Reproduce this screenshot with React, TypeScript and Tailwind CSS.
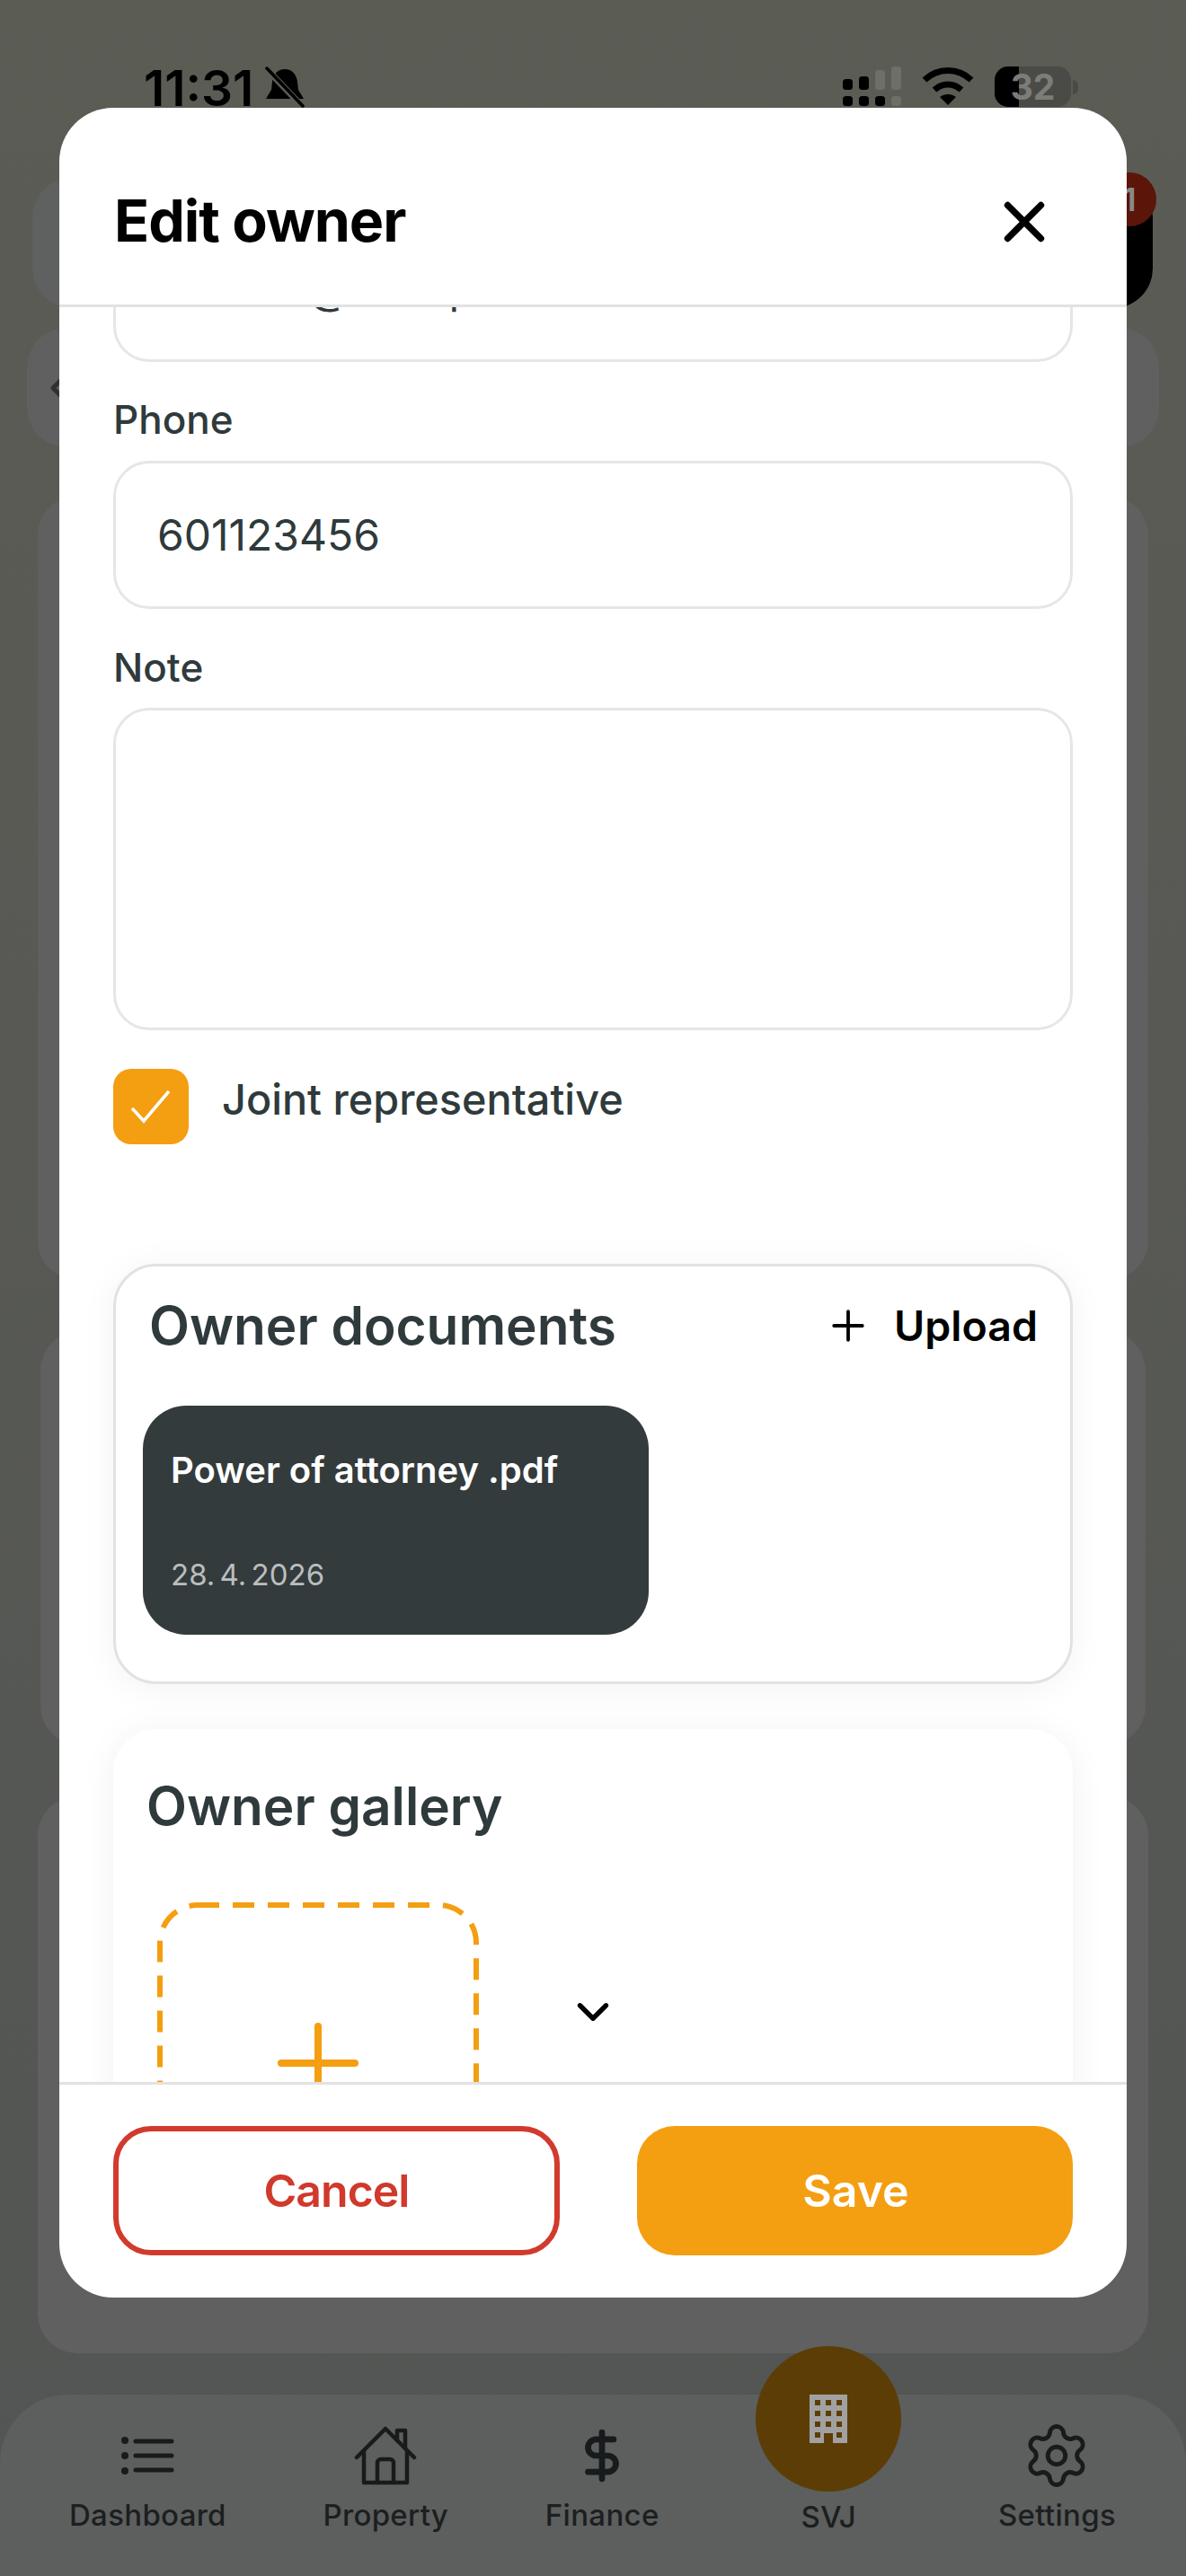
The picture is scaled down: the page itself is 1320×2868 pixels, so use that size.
import { X, Plus, ChevronDown, ChevronLeft, Settings, DollarSign } from 'lucide-react';

const navItems = [
  { label: 'Dashboard', icon: 'list' },
  { label: 'Property', icon: 'house' },
  { label: 'Finance', icon: 'dollar' },
  { label: 'SVJ', icon: 'building' },
  { label: 'Settings', icon: 'gear' },
];

const NavIcon = ({ icon }: { icon: string }) => {
  if (icon === 'list') {
    return (
      <svg width="60" height="44" viewBox="0 0 60 44" fill="none" stroke="#171b1c" strokeWidth="5" strokeLinecap="round">
        <circle cx="5" cy="5" r="4" fill="#171b1c" stroke="none" />
        <circle cx="5" cy="22" r="4" fill="#171b1c" stroke="none" />
        <circle cx="5" cy="39" r="4" fill="#171b1c" stroke="none" />
        <path d="M17 6h40M17 22h40M17 38h40" />
      </svg>
    );
  }
  if (icon === 'house') {
    return (
      <svg width="70" height="66" viewBox="0 0 70 66" fill="none" stroke="#171b1c" strokeWidth="4.5" strokeLinecap="round" strokeLinejoin="round">
        <path d="M3 35 35 3l32 32" />
        <path d="M11 28v35h48V28" />
        <path d="M26 63V41a4 4 0 0 1 4-4h10a4 4 0 0 1 4 4v22" />
        <path d="M48 16V5h9v20" />
      </svg>
    );
  }
  if (icon === 'dollar') {
    return <DollarSign size={62} color="#171b1c" strokeWidth={2.6} />;
  }
  if (icon === 'gear') {
    return <Settings size={78} color="#171b1c" strokeWidth={1.5} />;
  }
  return null;
};

export default function App() {
  return (
    <div className="relative h-[2868px] w-[1320px] overflow-hidden bg-linear-to-b from-[#5b5c54] to-[#535554] font-[Inter,sans-serif]">
      {/* dimmed page behind the dialog */}
      <div className="flex h-full flex-col">
        <div className="flex h-[198px] shrink-0 items-start justify-between pl-[160px] pr-[120px] pt-[68px]">
          <div className="flex items-center gap-[12px]">
            <span className="text-[55px] font-semibold leading-[60px] text-black">11:31</span>
            <svg width="46" height="48" viewBox="0 0 46 48" fill="#000">
              <path d="M23 3c8 0 13 6 14 14l1 9 6 10H2l6-10 1-9C10 9 15 3 23 3Z" />
              <path d="M2 2l40 42" stroke="#5b5c54" strokeWidth="7" />
              <path d="M3 2l40 42" stroke="#000" strokeWidth="3.5" strokeLinecap="round" />
            </svg>
          </div>
          <div className="flex items-start gap-[23px] pt-[6px]">
            <svg width="65" height="44" viewBox="0 0 65 44" fill="#000">
              <rect x="0" y="14" width="11" height="12" rx="3.5" />
              <rect x="18" y="11" width="11" height="15" rx="3.5" />
              <rect x="36" y="4" width="11" height="22" rx="3.5" fill="#6e6f69" />
              <rect x="54" y="0" width="11" height="26" rx="3.5" fill="#6e6f69" />
              <rect x="0" y="33" width="11" height="11" rx="3.5" />
              <rect x="18" y="33" width="11" height="11" rx="3.5" />
              <rect x="36" y="33" width="11" height="11" rx="3.5" />
              <rect x="54" y="33" width="11" height="11" rx="3.5" fill="#6e6f69" />
            </svg>
            <svg width="58" height="44" viewBox="0 0 58 44" fill="none" stroke="#000" strokeWidth="7">
              <path d="M3 15C18 1 40 1 55 15" />
              <path d="M14 26c9-8 21-8 30 0" />
              <path d="M29 43l-9-9c5-4 13-4 18 0Z" fill="#000" stroke="none" />
            </svg>
            <div className="flex items-center gap-[2px]">
              <div className="relative flex h-[45px] w-[85px] items-center justify-center overflow-hidden rounded-[15px] bg-[#4a4b47]">
                <div className="absolute inset-y-0 left-0 w-[27px] bg-black" />
                <span className="relative text-[39px] font-bold leading-none text-[#7c7d78]">32</span>
              </div>
              <div className="h-[16px] w-[6px] rounded-r-full bg-[#4a4b47]" />
            </div>
          </div>
        </div>

        <div className="relative ml-[36px] mr-[37px] flex h-[145px] shrink-0 justify-end rounded-[44px] bg-[#5f6060]">
          <div className="w-[200px] rounded-[44px] bg-black" />
          <div className="absolute right-[-4px] top-[-6px] flex h-[60px] w-[60px] items-center justify-center rounded-full bg-[#5b1509] text-[36px] font-semibold text-[#8a8a88]">
            1
          </div>
        </div>
        <div className="mx-[30px] mt-[22px] flex h-[133px] shrink-0 items-center rounded-[44px] bg-[#606060] pl-[14px]">
          <ChevronLeft size={40} color="#2e3233" strokeWidth={3} />
        </div>
        <div className="mx-[42px] mt-[54px] h-[873px] shrink-0 rounded-[44px] bg-[#606060]" />
        <div className="mx-[45px] mt-[57px] h-[461px] shrink-0 rounded-[44px] bg-[#606060]" />
        <div className="mx-[42px] mt-[57px] h-[620px] shrink-0 rounded-[44px] bg-[#606060]" />

        <div className="mt-[46px] flex flex-1 items-start justify-between rounded-t-[76px] bg-[#5d5e5e] pl-[77px] pr-[78px]">
          {navItems.map((item) => (
            <div key={item.label} className="flex flex-col items-center">
              {item.icon === 'building' ? (
                <div className="mt-[-54px] flex h-[162px] w-[162px] items-center justify-center rounded-full bg-[#5c3d06]">
                  <svg width="42" height="54" viewBox="0 0 42 54" fill="#a1a1a1" fillRule="evenodd">
                    <path d="M0 0h42v54H26V43H16v11H0ZM6 6v6h6V6Zm12 0v6h6V6Zm12 0v6h6V6ZM6 18v6h6v-6Zm12 0v6h6v-6Zm12 0v6h6v-6ZM6 30v6h6v-6Zm12 0v6h6v-6Zm12 0v6h6v-6ZM6 42v6h6v-6Zm24 0v6h6v-6Z" />
                  </svg>
                </div>
              ) : (
                <div className="mt-[30px] flex h-[76px] items-center justify-center">
                  <NavIcon icon={item.icon} />
                </div>
              )}
              <span className="mt-[6px] text-[33px] font-medium leading-[44px] tracking-[0.3px] text-[#1b1f20]">{item.label}</span>
            </div>
          ))}
        </div>
      </div>

      {/* dialog */}
      <div className="absolute left-[66px] top-[120px] flex h-[2438px] w-[1188px] flex-col overflow-hidden rounded-[60px] bg-white">
        <div className="flex h-[222px] shrink-0 items-center justify-between border-b-[3px] border-[#e2e2e2] pl-[61px] pr-[77px] pt-[34px]">
          <h1 className="text-[64.5px] font-bold leading-none tracking-[-1px] text-black">Edit owner</h1>
          <X size={74} color="#000" strokeWidth={2.4} />
        </div>

        <div className="relative min-h-0 flex-1 overflow-hidden">
          <div className="mt-[-104px] px-[60px]">
            <input
              readOnly
              value="adam.n@stemp.cz"
              className="block h-[165px] w-full rounded-[40px] border-[3px] border-[#e6e6e6] px-[46px] text-[48px] text-[#2f3a3c] outline-none"
            />
            <label className="mt-[38px] block h-[52px] text-[44px] font-medium leading-[52px] text-[#2f3a3c]">Phone</label>
            <input
              readOnly
              value="601123456"
              className="mt-[20px] block h-[165px] w-full rounded-[40px] border-[3px] border-[#e6e6e6] px-[46px] text-[48px] text-[#2f3a3c] outline-none"
            />
            <label className="mt-[40px] block h-[52px] text-[44px] font-medium leading-[50px] text-[#2f3a3c]">Note</label>
            <textarea readOnly className="mt-[18px] block h-[359px] w-full resize-none rounded-[40px] border-[3px] border-[#e6e6e6] outline-none" />

            <div className="mt-[43px] flex items-start gap-[37px]">
              <div className="flex h-[84px] w-[84px] items-center justify-center rounded-[20px] bg-[#f49e12]">
                <svg width="48" height="40" viewBox="0 0 48 40" fill="none" stroke="#fff" strokeWidth="3.5">
                  <path d="M3 22l13 14L44 3" />
                </svg>
              </div>
              <span className="text-[46.8px] font-medium leading-[68px] text-[#2f3a3c]">Joint representative</span>
            </div>

            <section className="mt-[133px] h-[468px] rounded-[48px] border-[3px] border-[#e2e2e2] bg-white pt-[36px] shadow-[0_4px_40px_rgba(0,0,0,0.05)]">
              <div className="flex h-[60px] items-center justify-between pl-[37px] pr-[36px]">
                <h2 className="text-[58.5px] font-semibold leading-none text-[#2f3a3c]">Owner documents</h2>
                <div className="flex items-center gap-[24px] text-black">
                  <Plus size={54} strokeWidth={1.7} />
                  <span className="text-[46.5px] font-semibold leading-none">Upload</span>
                </div>
              </div>
              <div className="ml-[30px] mt-[59px] flex h-[255px] w-[563px] flex-col rounded-[48px] bg-[#343b3c] pl-[31px]">
                <span className="mt-[48px] text-[40px] font-semibold leading-[48px] text-white">Power of attorney .pdf</span>
                <span className="mt-[72px] text-[33px] leading-[40px] text-[#b9bebe] [word-spacing:-4px]">28. 4. 2026</span>
              </div>
            </section>

            <section className="mt-[50px] h-[520px] rounded-[48px] bg-white pl-[37px] pt-[56px] shadow-[0_4px_40px_rgba(0,0,0,0.06)]">
              <h2 className="h-[60px] text-[58.5px] font-semibold leading-[60px] text-[#2f3a3c]">Owner gallery</h2>
              <div className="relative ml-[12px] mt-[77px] flex h-[358px] w-[358px] items-center justify-center">
                <svg className="absolute inset-0" width="358" height="358" viewBox="0 0 358 358" fill="none" stroke="#f49e12" strokeWidth="6">
                  <rect x="3" y="3" width="352" height="352" rx="42" strokeDasharray="24 15" />
                </svg>
                <svg width="90" height="90" viewBox="0 0 90 90" fill="none" stroke="#f49e12" strokeWidth="8" strokeLinecap="round">
                  <path d="M45 4v82M4 45h82" />
                </svg>
              </div>
            </section>
          </div>
          <ChevronDown size={58} color="#000" strokeWidth={2.2} className="absolute left-[565px] top-[1869px]" />
        </div>

        <div className="flex h-[240px] shrink-0 justify-between border-t-[3px] border-[#e2e2e2] px-[60px] pt-[46px]">
          <button type="button" className="h-[144px] w-[497px] rounded-[42px] border-[6px] border-[#d23a2e] text-[50px] font-semibold tracking-[-1px] text-[#d0392b]">
            Cancel
          </button>
          <button type="button" className="h-[144px] w-[485px] rounded-[42px] bg-[#f49e12] pl-[2px] text-[50px] font-semibold text-white">
            Save
          </button>
        </div>
      </div>
    </div>
  );
}
